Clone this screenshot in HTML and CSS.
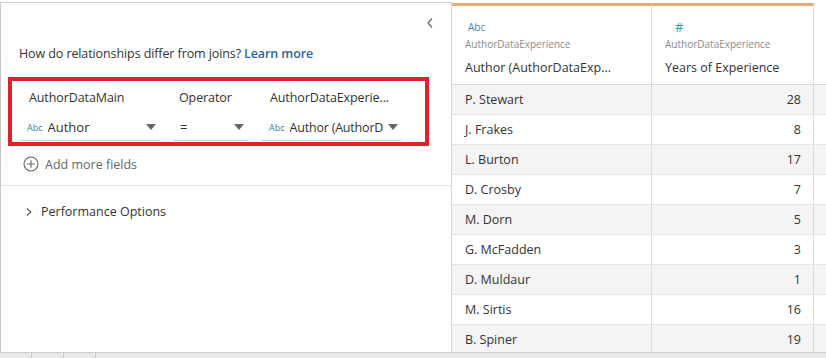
FILE: index.html
```html
<!DOCTYPE html>
<html>
<head>
<meta charset="utf-8">
<link rel="stylesheet" href="styles.css">
</head>
<body>
<div class="app">
  <div class="main">
    <div class="left">
      <div class="collapse-row"><svg class="collapse" width="8" height="12" viewBox="0 0 8 12"><path d="M6 1.5L2 6l4 4.5" fill="none" stroke="#666" stroke-width="1.2"/></svg></div>
      <div class="question">How do relationships differ from joins? <a class="learn">Learn more</a></div>
      <div class="relbox">
        <div class="labels">
          <span class="lab lab1">AuthorDataMain</span>
          <span class="lab lab2">Operator</span>
          <span class="lab lab3">AuthorDataExperie...</span>
        </div>
        <div class="selects">
          <div class="sel sel1"><span class="abc">Abc</span><span class="val">Author</span><span class="caret"></span></div>
          <div class="sel sel2"><span class="val">=</span><span class="caret"></span></div>
          <div class="sel sel3"><span class="abc">Abc</span><span class="val">Author (AuthorD</span><span class="caret"></span></div>
        </div>
      </div>
      <div class="add">
        <svg class="plus" width="16" height="16" viewBox="0 0 16 16"><circle cx="8" cy="8" r="7" fill="none" stroke="#666" stroke-width="1.1"/><path d="M8 4.2v7.6M4.2 8h7.6" stroke="#666" stroke-width="1.1"/></svg>
        <span>Add more fields</span>
      </div>
      <div class="perf">
        <svg class="chev" width="8" height="10" viewBox="0 0 8 10"><path d="M2 1.5l3.8 3.5L2 8.5" fill="none" stroke="#555" stroke-width="1.1"/></svg>
        <span>Performance Options</span>
      </div>
    </div>
    <div class="right">
      <div class="grid">
        <div class="hrow">
          <div class="hcell c1">
            <div class="type abc-t">Abc</div>
            <div class="src">AuthorDataExperience</div>
            <div class="fname">Author (AuthorDataExp...</div>
          </div>
          <div class="hcell c2">
            <div class="type num-t">#</div>
            <div class="src">AuthorDataExperience</div>
            <div class="fname">Years of Experience</div>
          </div>
          <div class="hcell c3"></div>
        </div>
        <div class="row alt"><div class="cell c1">P. Stewart</div><div class="cell c2">28</div><div class="cell c3"></div></div>
        <div class="row"><div class="cell c1">J. Frakes</div><div class="cell c2">8</div><div class="cell c3"></div></div>
        <div class="row alt"><div class="cell c1">L. Burton</div><div class="cell c2">17</div><div class="cell c3"></div></div>
        <div class="row"><div class="cell c1">D. Crosby</div><div class="cell c2">7</div><div class="cell c3"></div></div>
        <div class="row alt"><div class="cell c1">M. Dorn</div><div class="cell c2">5</div><div class="cell c3"></div></div>
        <div class="row"><div class="cell c1">G. McFadden</div><div class="cell c2">3</div><div class="cell c3"></div></div>
        <div class="row alt"><div class="cell c1">D. Muldaur</div><div class="cell c2">1</div><div class="cell c3"></div></div>
        <div class="row"><div class="cell c1">M. Sirtis</div><div class="cell c2">16</div><div class="cell c3"></div></div>
        <div class="row alt"><div class="cell c1">B. Spiner</div><div class="cell c2">19</div><div class="cell c3"></div></div>
      </div>
    </div>
  </div>
  <div class="tabs"><span class="tab"></span><span class="tab"></span><span class="tab"></span><span class="tab last"></span></div>
</div>
</body>
</html>
```
FILE: styles.css
```css
* { box-sizing: border-box; }
html, body { margin: 0; padding: 0; background: #fff; }
body { width: 826px; height: 358px; overflow: hidden; font-family: "Open Sans", "Liberation Sans", sans-serif; color: #333; }
.app { display: flex; flex-direction: column; height: 358px; }
.main { display: flex; height: 352px; }
.left { width: 452px; border-left: 1px solid #c8c8c8; margin-top: 2px; border-top: 1px solid #d0d0d0; border-right: 1px solid #d6d6d6; display: flex; flex-direction: column; }
.collapse-row { display: flex; justify-content: flex-end; height: 30px; padding: 14px 17px 0 0; }
.collapse { display: block; }
.question { font-size: 12.5px; margin: 12px 0 0 18px; line-height: 18px; letter-spacing: -0.1px; }
.learn { color: #2f6499; font-weight: 600; }
.relbox { margin: 14px 0 0 7px; width: 421px; height: 69px; border: 4px solid #e2202a; padding: 0 0 0 8px; }
.labels { display: flex; font-size: 12.5px; height: 30px; align-items: center; padding-top: 2px; letter-spacing: -0.1px; }
.lab1 { margin-left: 9px; width: 150px; }
.lab2 { width: 91px; }
.selects { display: flex; height: 27px; align-items: center; margin-top: 3px; }
.sel { display: flex; align-items: center; height: 26px; border-bottom: 1px solid #d2d2d2; }
.sel1 { width: 140px; padding-left: 7px; }
.sel2 { width: 75px; margin-left: 13px; padding-left: 7px; }
.sel3 { width: 140px; margin-left: 13px; padding-left: 8px; }
.abc { font-size: 9px; color: #3d7d9a; margin-right: 5px; margin-top: 1px; }
.val { font-size: 13px; flex: 1; white-space: nowrap; overflow: hidden; }
.caret { width: 0; height: 0; border-left: 5px solid transparent; border-right: 5px solid transparent; border-top: 6px solid #666; margin-right: 4px; flex: none; }
.sel3 .val { font-size: 12.5px; letter-spacing: -0.2px; }
.sel3 .caret { margin-right: 3px; margin-left: 5px; }
.add { display: flex; align-items: center; margin: 10px 0 0 22px; font-size: 12.5px; color: #666; height: 16px; }
.plus { margin-right: 6px; }
.perf { margin-top: 13px; border-top: 1px solid #e2e2e2; display: flex; align-items: center; padding: 17px 0 0 24px; font-size: 12.5px; color: #333; }
.chev { margin-right: 8px; }
.right { flex: 1; display: flex; flex-direction: column; }
.grid { border-top: 3px solid #fff; }
.hrow { display: flex; height: 82px; border-bottom: 1px solid #d8d8d8; }
.hcell { border-top: 3px solid #eaaa72; }
.hcell.c3 { border-top: 3px solid #fff; }
.c1 { width: 200px; border-right: 1px solid #dcdcdc; }
.c2 { width: 162px; border-right: 1px solid #dcdcdc; }
.c3 { flex: 1; }
.hcell.c1, .hcell.c2 { padding: 14px 0 0 13px; }
.type { font-size: 10px; height: 14px; line-height: 14px; }
.abc-t { color: #3d8ba0; padding-left: 3px; }
.num-t { color: #2aa58f; font-size: 13px; padding-left: 10px; }
.src { font-size: 10px; color: #8a8a8a; margin-top: 3px; }
.fname { font-size: 12.5px; color: #333; margin-top: 8px; font-weight: 500; white-space: nowrap; }
.row { display: flex; height: 30px; border-bottom: 1px solid #e4e4e4; }
.row.alt { background: #f4f4f4; }
.cell { display: flex; align-items: center; font-size: 12.5px; }
.cell.c1 { padding-left: 13px; }
.cell.c2 { justify-content: flex-end; padding-right: 12px; }
.tabs { height: 6px; background: #e8e8e8; border-top: 1px solid #cfcfcf; display: flex; }
.tab { width: 32px; border-right: 1px solid #c8c8c8; }
.tab.last { border-right: none; }
```
